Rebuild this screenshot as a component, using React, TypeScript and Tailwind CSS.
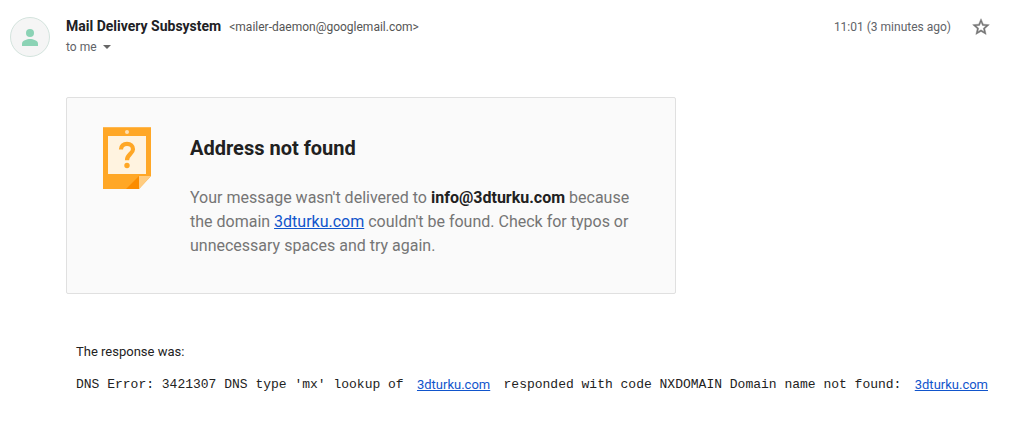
import { useState } from "react";

function DomainLink() {
  return (
    <a href="http://3dturku.com" className="font-['Roboto',sans-serif] text-[#1155cc] underline">
      3dturku.com
    </a>
  );
}

function Avatar() {
  return (
    <svg viewBox="0 0 40 40" className="h-10 w-10 shrink-0" aria-hidden="true">
      <circle cx="20" cy="20" r="19.5" fill="#f5f5f5" stroke="#d3e3dd" strokeWidth="1" />
      <circle cx="20" cy="16" r="4" fill="#8bd3b5" />
      <path d="M12 29v-2.500c0-3 5-4.500 8-4.500s8 1.500 8 4.500V29z" fill="#8bd3b5" />
    </svg>
  );
}

// Orange note with a folded bottom right corner
function NoteIcon() {
  return (
    <svg viewBox="0 0 48 62" className="h-[62px] w-12 shrink-0" aria-hidden="true">
      <path d="M0 0h48v49L36 62H0z" fill="#ffa726" />
      <path d="M0 0h48v1H0z" fill="#ffb851" />
      <path d="M5 9h38v38H5z" fill="#fff3e0" />
      <circle cx="24" cy="5" r="2" fill="#ffe0b2" />
      <path d="M36 49v13H23z" fill="#fb8c00" />
      <path d="M36 49h12L36 62z" fill="#ffcc80" />
      <path
        d="M18 22.500c0-3.500 2.500-5.700 6-5.700s6 2.200 6 5.400c0 4.600-6 5-6 11"
        fill="none"
        stroke="#ffa726"
        strokeWidth="4.2"
      />
      <circle cx="24" cy="38.500" r="2.700" fill="#ffa726" />
    </svg>
  );
}

function MessageHeader() {
  const [starred, setStarred] = useState(false);

  return (
    <header className="flex items-start gap-4 pl-2.5 pr-[19px] pt-[17px]">
      <Avatar />
      <div className="min-w-0 flex-1">
        <div className="flex items-baseline gap-2 leading-[18px]">
          <h3 className="text-sm leading-[18px] font-bold text-[#202124]">Mail Delivery Subsystem</h3>
          <span className="text-xs leading-[18px] text-[#555]">&lt;mailer-daemon@googlemail.com&gt;</span>
        </div>
        <button type="button" className="flex items-center gap-1.5 text-xs leading-[22px] text-[#5f6368]">
          to me
          <svg viewBox="0 0 8 4" className="h-1 w-2" fill="#666" aria-hidden="true">
            <path d="M0 0h8L4 4z" />
          </svg>
        </button>
      </div>
      <time className="text-xs leading-5 text-[#5f6368]">11:01 (3 minutes ago)</time>
      <button
        type="button"
        aria-label="Star"
        aria-pressed={starred}
        onClick={() => setStarred(!starred)}
        className="ml-1"
      >
        <svg viewBox="0 0 24 24" className="h-5 w-5" fill="#757575" stroke="#757575" strokeWidth="0.5" aria-hidden="true">
          {starred ? (
            <path d="M12 17.270L18.180 21l-1.640-7.030L22 9.240l-7.190-.61L12 2 9.190 8.630 2 9.240l5.460 4.730L5.820 21z" />
          ) : (
            <path d="M22 9.240l-7.190-.62L12 2 9.190 8.630 2 9.240l5.460 4.730L5.820 21 12 17.270 18.180 21l-1.630-7.030L22 9.240zM12 15.400l-3.760 2.270 1-4.280-3.320-2.880 4.380-.38L12 6.100l1.710 4.040 4.380.38-3.320 2.880 1 4.280L12 15.400z" />
          )}
        </svg>
      </button>
    </header>
  );
}

export default function App() {
  return (
    <main className="bg-white font-['Roboto',sans-serif]">
      <MessageHeader />
      <section className="ml-[66px] mt-[39px] flex max-w-[610px] items-start gap-[39px] rounded-xs border border-[#e0e0e0] bg-[#fafafa] pb-[35px] pl-9 pr-8 pt-[29px]">
        <NoteIcon />
        <div>
          <h2 className="mt-[9px] text-xl leading-6 font-bold text-[#212121]">Address not found</h2>
          <p className="mt-[26px] text-base leading-6 text-[#757575]">
            Your message wasn't delivered to <b className="text-[#212121]">info@3dturku.com</b> because the domain{" "}
            <DomainLink /> couldn't be found. Check for typos or unnecessary spaces and try again.
          </p>
        </div>
      </section>
      <section className="ml-[76px] mr-[22px] mt-12 text-[13px] leading-5 text-[#222]">
        <p>The response was:</p>
        <p className="mt-[13px] flex max-w-[912px] flex-wrap justify-between gap-x-2 font-['Liberation_Mono',monospace]">
          <span>DNS Error: 3421307 DNS type 'mx' lookup of</span>
          <DomainLink />
          <span>responded with code NXDOMAIN Domain name not found:</span>
          <DomainLink />
        </p>
      </section>
    </main>
  );
}
